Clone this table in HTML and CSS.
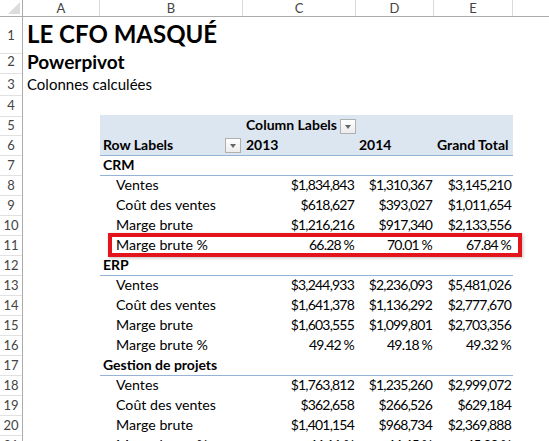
FILE: index.html
```html
<!DOCTYPE html>
<html lang="fr">
<head>
    <meta charset="UTF-8">
    <title>Le CFO masqué - Powerpivot</title>
    <link rel="stylesheet" href="styles.css">
</head>
<body>
<div class="sheet">
    <div class="colhead">
        <div class="corner">
            <svg width="12" height="12" viewBox="0 0 12 12"><polygon points="12,0 12,12 0,12" fill="#dcdcdc"/></svg>
        </div>
        <div class="col">A</div>
        <div class="col">B</div>
        <div class="col">C</div>
        <div class="col">D</div>
        <div class="col">E</div>
        <div class="col last"></div>
    </div>

    <div class="row r1"><div class="rn">1</div><div class="title">LE CFO MASQUÉ</div></div>
    <div class="row r2"><div class="rn">2</div><div class="subtitle">Powerpivot</div></div>
    <div class="row r3"><div class="rn">3</div><div class="note">Colonnes calculées</div></div>
    <div class="row r4"><div class="rn">4</div></div>

    <!-- pivot header -->
    <div class="row">
        <div class="rn">5</div><div></div>
        <div class="pv head"></div>
        <div class="pv head bold">Column Labels <span class="drop"></span></div>
        <div class="pv head"></div>
        <div class="pv head"></div>
    </div>
    <div class="row">
        <div class="rn">6</div><div></div>
        <div class="pv head bold line split">Row Labels <span class="drop"></span></div>
        <div class="pv head bold line">2013</div>
        <div class="pv head bold line">2014</div>
        <div class="pv head bold line">Grand Total</div>
    </div>

    <!-- CRM -->
    <div class="row"><div class="rn">7</div><div></div><div class="pv bold line">CRM</div><div class="pv line"></div><div class="pv line"></div><div class="pv line"></div></div>
    <div class="row"><div class="rn">8</div><div></div><div class="pv sub">Ventes</div><div class="pv num">$1,834,843</div><div class="pv num">$1,310,367</div><div class="pv num">$3,145,210</div></div>
    <div class="row"><div class="rn">9</div><div></div><div class="pv sub">Coût des ventes</div><div class="pv num">$618,627</div><div class="pv num">$393,027</div><div class="pv num">$1,011,654</div></div>
    <div class="row"><div class="rn">10</div><div></div><div class="pv sub">Marge brute</div><div class="pv num">$1,216,216</div><div class="pv num">$917,340</div><div class="pv num">$2,133,556</div></div>
    <div class="row marked">
        <div class="rn">11</div><div></div><div class="pv sub">Marge brute %</div><div class="pv num">66.28 %</div><div class="pv num">70.01 %</div><div class="pv num">67.84 %</div>
        <div class="highlight"></div>
    </div>

    <!-- ERP -->
    <div class="row"><div class="rn">12</div><div></div><div class="pv bold line">ERP</div><div class="pv line"></div><div class="pv line"></div><div class="pv line"></div></div>
    <div class="row"><div class="rn">13</div><div></div><div class="pv sub">Ventes</div><div class="pv num">$3,244,933</div><div class="pv num">$2,236,093</div><div class="pv num">$5,481,026</div></div>
    <div class="row"><div class="rn">14</div><div></div><div class="pv sub">Coût des ventes</div><div class="pv num">$1,641,378</div><div class="pv num">$1,136,292</div><div class="pv num">$2,777,670</div></div>
    <div class="row"><div class="rn">15</div><div></div><div class="pv sub">Marge brute</div><div class="pv num">$1,603,555</div><div class="pv num">$1,099,801</div><div class="pv num">$2,703,356</div></div>
    <div class="row"><div class="rn">16</div><div></div><div class="pv sub">Marge brute %</div><div class="pv num">49.42 %</div><div class="pv num">49.18 %</div><div class="pv num">49.32 %</div></div>

    <!-- Gestion de projets -->
    <div class="row"><div class="rn">17</div><div></div><div class="pv bold line">Gestion de projets</div><div class="pv line"></div><div class="pv line"></div><div class="pv line"></div></div>
    <div class="row"><div class="rn">18</div><div></div><div class="pv sub">Ventes</div><div class="pv num">$1,763,812</div><div class="pv num">$1,235,260</div><div class="pv num">$2,999,072</div></div>
    <div class="row"><div class="rn">19</div><div></div><div class="pv sub">Coût des ventes</div><div class="pv num">$362,658</div><div class="pv num">$266,526</div><div class="pv num">$629,184</div></div>
    <div class="row"><div class="rn">20</div><div></div><div class="pv sub">Marge brute</div><div class="pv num">$1,401,154</div><div class="pv num">$968,734</div><div class="pv num">$2,369,888</div></div>
    <div class="row"><div class="rn">21</div><div></div><div class="pv sub">Marge brute %</div><div class="pv num">46.11 %</div><div class="pv num">44.45 %</div><div class="pv num">45.39 %</div></div>
</div>
</body>
</html>
```

FILE: styles.css
```css
body {
    margin: 0;
    background: #fff;
    overflow: hidden;
    font-family: Lato, "Liberation Sans", sans-serif;
    color: #000;
}

.sheet {
    width: 549px;
}

.colhead,
.row {
    display: grid;
    grid-template-columns: 23px 77px 143px 113px 78px 79px 1fr;
}

.colhead {
    height: 17px;
    border-bottom: 1px solid #ababab;
    box-sizing: border-box;
}

.corner {
    display: flex;
    justify-content: flex-end;
    align-items: flex-end;
    padding: 0 2px 2px 0;
    border-right: 1px solid #ababab;
}

.col {
    text-align: center;
    font-size: 13px;
    line-height: 16px;
    color: #444;
    border-right: 1px solid #dadada;
}
.col.last {
    border-right: none;
}

.row {
    position: relative;
    height: 20px;
    line-height: 20px;
    font-size: 15px;
    white-space: nowrap;
}

.rn {
    text-align: center;
    font-size: 13px;
    color: #444;
    border-right: 1px solid #ababab;
    border-bottom: 1px solid #e1e1e1;
    box-sizing: border-box;
}

.r1 { height: 33px; }
.r2 { height: 23px; }
.r3 { height: 21px; }
.r4 { height: 21px; }

.r1 .rn { line-height: 36px; }
.r2 .rn, .r3 .rn, .r4 .rn { line-height: 22px; }

.title,
.subtitle,
.note {
    grid-column: 2 / -1;
    padding-left: 4px;
}

.title {
    font-size: 24px;
    font-weight: 700;
    line-height: 33px;
}

.subtitle {
    font-size: 19px;
    font-weight: 700;
    line-height: 24px;
}

.note {
    line-height: 22px;
}

/* pivot table */
.pv {
    padding: 0 2px 0 3px;
    box-sizing: border-box;
    font-size: 14.2px;
}

.head {
    background: #dce6f1;
}

.bold {
    font-weight: 700;
    font-size: 14px;
}

.line {
    border-bottom: 1px solid #95b3d7;
}

.sub {
    padding-left: 16px;
}

.num {
    text-align: right;
    font-size: 14px;
    letter-spacing: -0.8px;
}

.split {
    display: flex;
    justify-content: space-between;
    align-items: center;
}

.drop {
    display: inline-block;
    width: 14px;
    height: 13px;
    border: 1px solid #b0b0b0;
    background: linear-gradient(#ffffff, #ececec);
    position: relative;
    vertical-align: middle;
}
.drop::after {
    content: "";
    position: absolute;
    left: 4px;
    top: 5px;
    border-left: 3px solid transparent;
    border-right: 3px solid transparent;
    border-top: 4px solid #666;
}

.highlight {
    position: absolute;
    left: 108px;
    top: -2px;
    width: 414px;
    height: 24px;
    border: 4px solid #e3141b;
    box-sizing: border-box;
    box-shadow: 1px 1px 3px rgba(0, 0, 0, 0.25);
}
```
